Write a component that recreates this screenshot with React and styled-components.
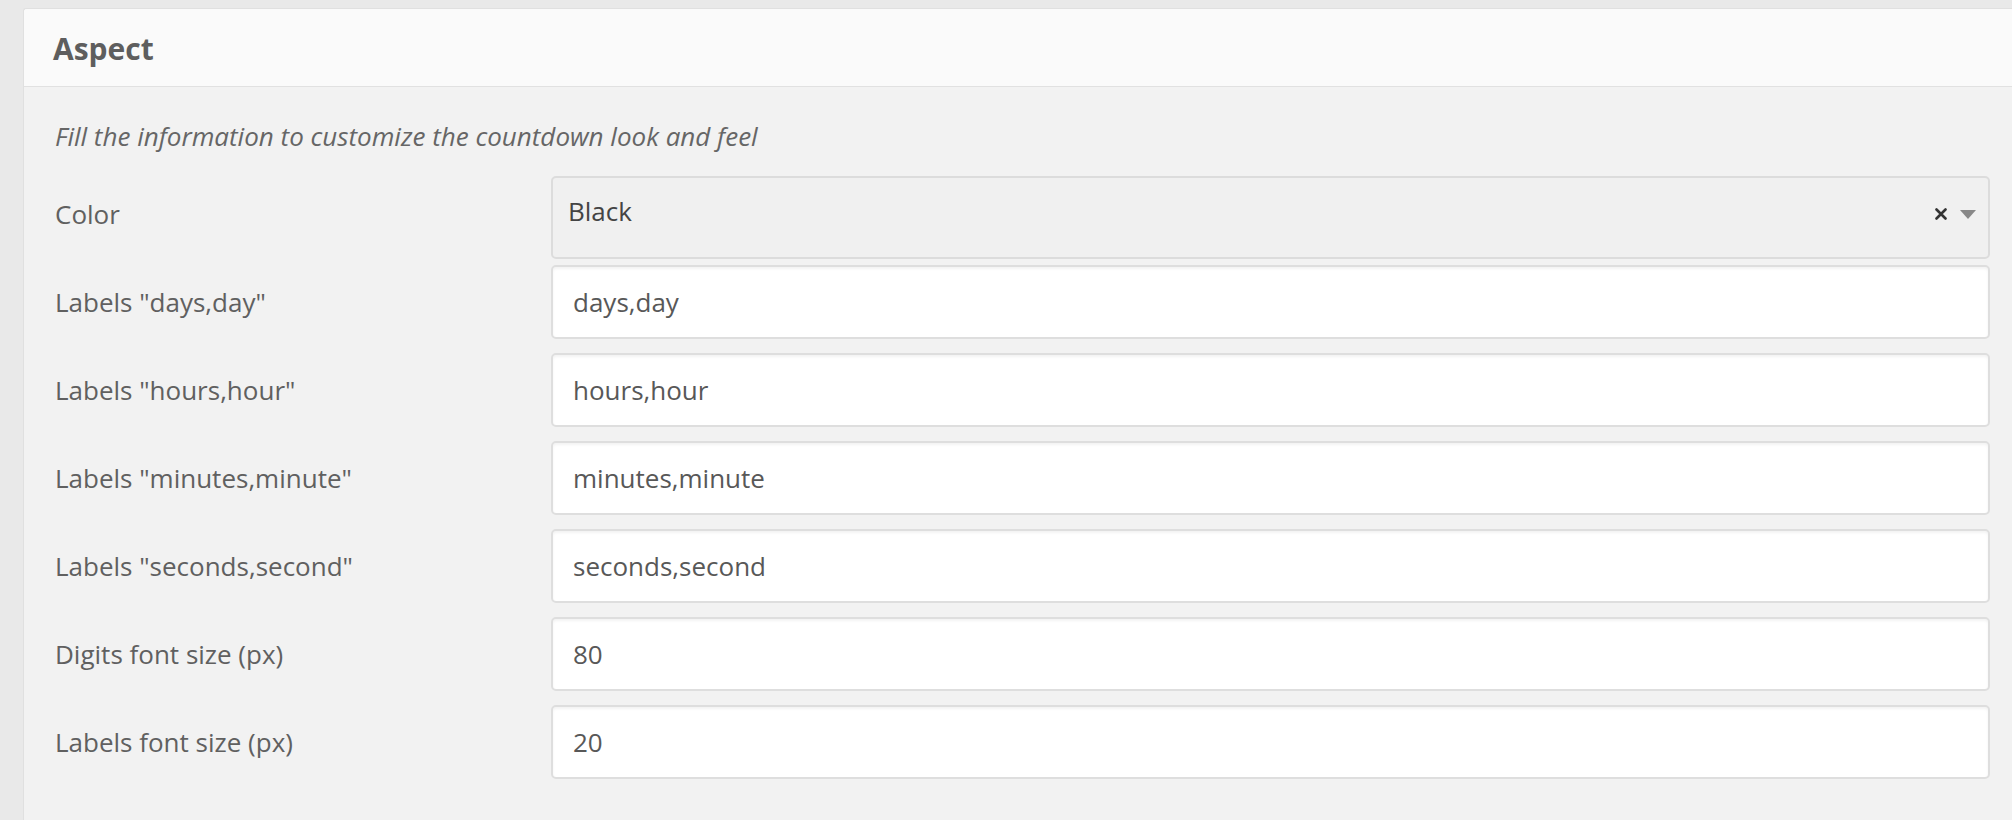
import React from 'react';
import styled, { createGlobalStyle } from 'styled-components';

const Global = createGlobalStyle`
  html, body {
    margin: 0;
    padding: 0;
    background: #e9e9e9;
    font-family: "Open Sans", "Liberation Sans", sans-serif;
  }
`;

const Page = styled.div`
  padding: 8px 0 0 23px;
  height: 820px;
  box-sizing: border-box;
  overflow: hidden;
`;

const Panel = styled.div`
  background: #f2f2f2;
  border: 1px solid #e0e0e0;
  border-right: none;
  border-radius: 3px 0 0 0;
  min-height: 900px;
`;

const Header = styled.div`
  background: #fafafa;
  border-bottom: 1px solid #e1e1e1;
  padding: 20px 30px 17px 29px;
  border-radius: 3px 0 0 0;
`;

const Title = styled.h3`
  margin: 0;
  font-size: 30px;
  line-height: 40px;
  font-weight: 700;
  color: #5e5e5e;
`;

const Body = styled.div`
  padding: 31px 22px 0 31px;
`;

const Intro = styled.p`
  margin: 0 0 22px;
  font-size: 26px;
  line-height: 36px;
  font-style: italic;
  color: #666;
`;

const Row = styled.div`
  display: grid;
  grid-template-columns: 496px 1fr;
  align-items: start;
  margin-bottom: ${(p) => p.$gap}px;
`;

const Label = styled.label`
  padding-top: ${(p) => p.$top}px;
  font-size: 26px;
  line-height: 36px;
  color: #606060;
`;

const Input = styled.input`
  box-sizing: border-box;
  width: 100%;
  height: 74px;
  margin: 0;
  padding: 0 20px;
  border: 2px solid #dedede;
  border-radius: 5px;
  background: #fff;
  box-shadow: inset 0 2px 3px rgba(0, 0, 0, 0.05);
  font-family: inherit;
  font-size: 26px;
  color: #585858;
  outline: none;
`;

const Select = styled.div`
  box-sizing: border-box;
  height: 83px;
  display: flex;
  align-items: flex-start;
  padding: 15px 12px 0 15px;
  border: 2px solid #dcdcdc;
  border-radius: 5px;
  background: #f0f0f0;
`;

const SelectValue = styled.span`
  flex: 1;
  font-size: 26px;
  line-height: 36px;
  color: #444;
`;

const SelectControls = styled.span`
  display: flex;
  align-items: center;
  gap: 13px;
  margin-top: 15px;
`;

const Clear = () => (
  <svg width="12" height="12" viewBox="0 0 12 12">
    <path d="M1.5 1.5 L10.5 10.5 M10.5 1.5 L1.5 10.5" stroke="#333" strokeWidth="2.6" strokeLinecap="round" />
  </svg>
);

const Arrow = () => (
  <svg width="16" height="9" viewBox="0 0 16 9">
    <path d="M0 0 H16 L8 9 Z" fill="#888" />
  </svg>
);

const fields = [
  { label: 'Labels "days,day"', value: 'days,day' },
  { label: 'Labels "hours,hour"', value: 'hours,hour' },
  { label: 'Labels "minutes,minute"', value: 'minutes,minute' },
  { label: 'Labels "seconds,second"', value: 'seconds,second' },
  { label: 'Digits font size (px)', value: '80' },
  { label: 'Labels font size (px)', value: '20' },
];

const App = () => {
  return (
    <Page>
      <Global />
      <Panel>
        <Header>
          <Title>Aspect</Title>
        </Header>
        <Body>
          <Intro>Fill the information to customize the countdown look and feel</Intro>
          <Row $gap={6}>
            <Label $top={20}>Color</Label>
            <Select>
              <SelectValue>Black</SelectValue>
              <SelectControls>
                <Clear />
                <Arrow />
              </SelectControls>
            </Select>
          </Row>
          {fields.map((f) => (
            <Row key={f.label} $gap={14}>
              <Label $top={19}>{f.label}</Label>
              <Input defaultValue={f.value} />
            </Row>
          ))}
        </Body>
      </Panel>
    </Page>
  );
};

export default App;
